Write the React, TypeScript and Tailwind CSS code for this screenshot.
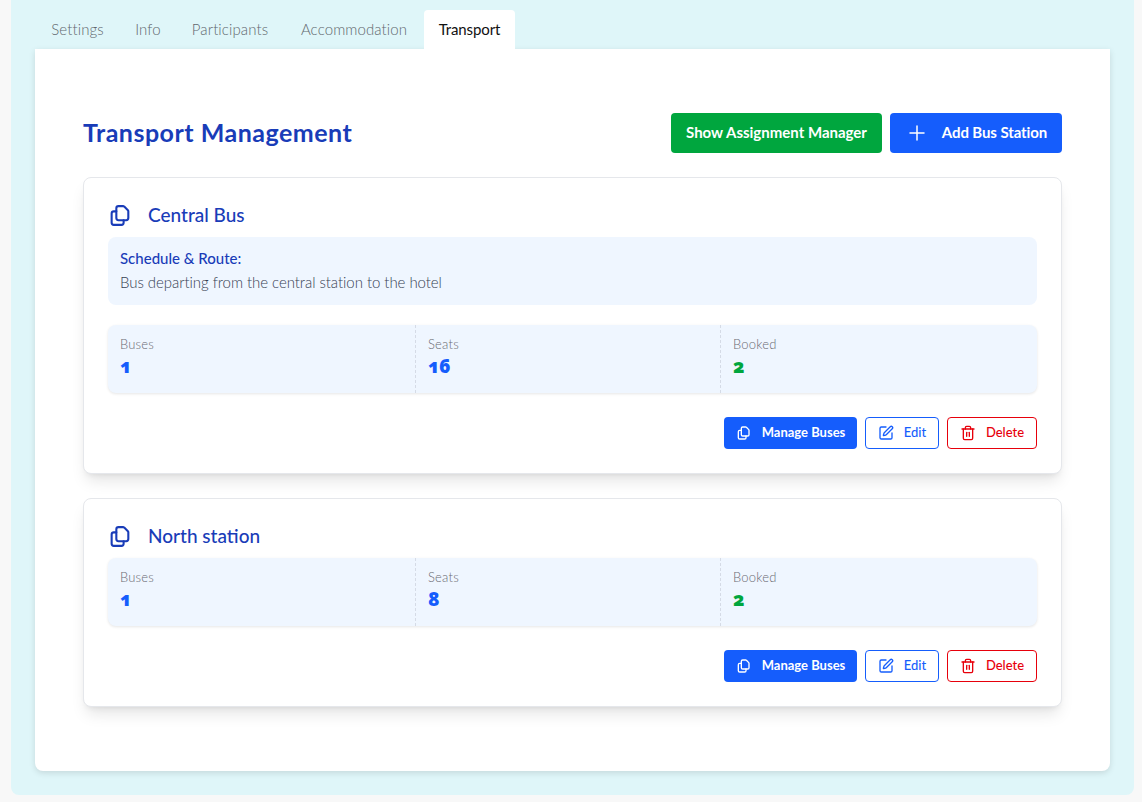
import React from "react";
import { Plus, SquarePen, Trash2 } from "lucide-react";

const tabs = [
  { label: "Settings", width: "w-[85px]" },
  { label: "Info", width: "w-[56px]" },
  { label: "Participants", width: "w-[108px]" },
  { label: "Accommodation", width: "w-[140px]" },
];

function CopyIcon({ className }: { className?: string }) {
  return (
    <svg viewBox="0 0 24 24" fill="none" stroke="currentColor" strokeWidth="2" strokeLinejoin="round" strokeLinecap="round" className={className}>
      <path d="M10 3h4.500c.4 0 .8.200 1.100.4l3.500 3.500c.3.300.4.700.4 1.100v6.500a2 2 0 0 1-2 2H10a2 2 0 0 1-2-2V5a2 2 0 0 1 2-2Z" />
      <path d="M8 8H5.500a2 2 0 0 0-2 2v9a2 2 0 0 0 2 2H13a2 2 0 0 0 2-2v-2.500" />
    </svg>
  );
}

function Stat({ label, value, green, className }: { label: string; value: string; green?: boolean; className: string }) {
  return (
    <div className={className}>
      <div className="pt-[11px] text-[13px] leading-[16px] tracking-[0.2px] text-[#6b6b73] font-light">{label}</div>
      <div className={`mt-[2px] text-[19px] leading-[24px] tracking-[-0.5px] font-extrabold font-['Open_Sans'] oldstyle-nums ${green ? "text-[#00a63e]" : "text-[#155dfc]"}`}>{value}</div>
    </div>
  );
}

function Station({ name, seats, route }: { name: string; seats: string; route?: string }) {
  return (
    <div className="rounded-lg border border-[#e5e7eb] bg-white p-6 shadow-lg">
      <div className="flex h-[35px] items-center pb-[8px]">
        <CopyIcon className="h-[25px] w-[25px] text-[#193cb8]" />
        <h3 className="ml-[15px] text-[19px] font-medium text-[#193cb8]">{name}</h3>
      </div>
      {route && (
        <div className="mb-5 h-[68px] rounded-lg bg-[#eff6ff] px-3 pt-[10px]">
          <div className="text-[15px] leading-[23px] font-medium text-[#193cb8]">Schedule &amp; Route:</div>
          <div className="text-[15px] leading-[25px] tracking-[-0.05px] font-light text-[#364153]">{route}</div>
        </div>
      )}
      <div className="grid h-[68px] grid-cols-[308px_305px_1fr] rounded-lg bg-[#eff6ff] shadow-[0_1px_3px_rgba(0,0,0,0.1)]">
        <Stat label="Buses" value="1" className="border-r border-dashed border-[#d5dbe6] pl-3" />
        <Stat label="Seats" value={seats} className="border-r border-dashed border-[#d5dbe6] pl-3" />
        <Stat label="Booked" value="2" green className="pl-3" />
      </div>
      <div className="mt-6 flex justify-end gap-2">
        <button className="flex h-8 w-[133px] items-center justify-center gap-[10px] rounded bg-[#155dfc] text-[13px] font-bold text-white">
          <CopyIcon className="h-[16px] w-[16px]" />
          Manage Buses
        </button>
        <button className="flex h-8 w-[74px] items-center justify-center gap-[10px] rounded border border-[#155dfc] text-[13px] font-medium text-[#155dfc]">
          <SquarePen className="h-[16px] w-[16px]" />
          Edit
        </button>
        <button className="flex h-8 w-[90px] items-center justify-center gap-[10px] rounded border border-[#e7000b] text-[13px] font-medium text-[#e7000b]">
          <Trash2 className="h-[16px] w-[16px]" />
          Delete
        </button>
      </div>
    </div>
  );
}

export default function App() {
  return (
    <div className="h-[802px] overflow-hidden bg-[#f8f8f8] px-[11px] font-['Lato',sans-serif]">
      <div className="h-[795px] w-[1123px] rounded-b-lg bg-[#dff6f9] px-6 pt-[10px]">
        <div className="flex h-[39px]">
          {tabs.map((t) => (
            <div key={t.label} className={`flex items-center justify-center pb-px text-[15px] tracking-[0.1px] font-light text-[#62686e] ${t.width}`}>{t.label}</div>
          ))}
          <div className="flex w-[91px] items-center justify-center rounded-t bg-white pb-px text-[15px] tracking-[-0.1px] text-[#111]">Transport</div>
        </div>
        <div className="h-[722px] w-[1075px] rounded-b-lg bg-white px-12 pt-16 shadow-[0_2px_6px_rgba(0,0,0,0.12)]">
          <div className="flex h-10 items-center justify-between">
            <h2 className="pb-px text-[25px] tracking-[0.5px] font-bold text-[#193cb8]">Transport Management</h2>
            <div className="flex gap-2">
              <button className="h-10 w-[211px] rounded bg-[#00a63e] pb-px text-[15px] font-bold text-white">Show Assignment Manager</button>
              <button className="flex h-10 w-[172px] items-center justify-center gap-[13px] rounded bg-[#155dfc] pb-px text-[15px] tracking-[-0.1px] font-bold text-white">
                <Plus className="h-[24px] w-[24px]" strokeWidth={1.5} />
                Add Bus Station
              </button>
            </div>
          </div>
          <div className="mt-6 flex flex-col gap-6">
            <Station name="Central Bus" seats="16" route="Bus departing from the central station to the hotel" />
            <Station name="North station" seats="8" />
          </div>
        </div>
      </div>
    </div>
  );
}
